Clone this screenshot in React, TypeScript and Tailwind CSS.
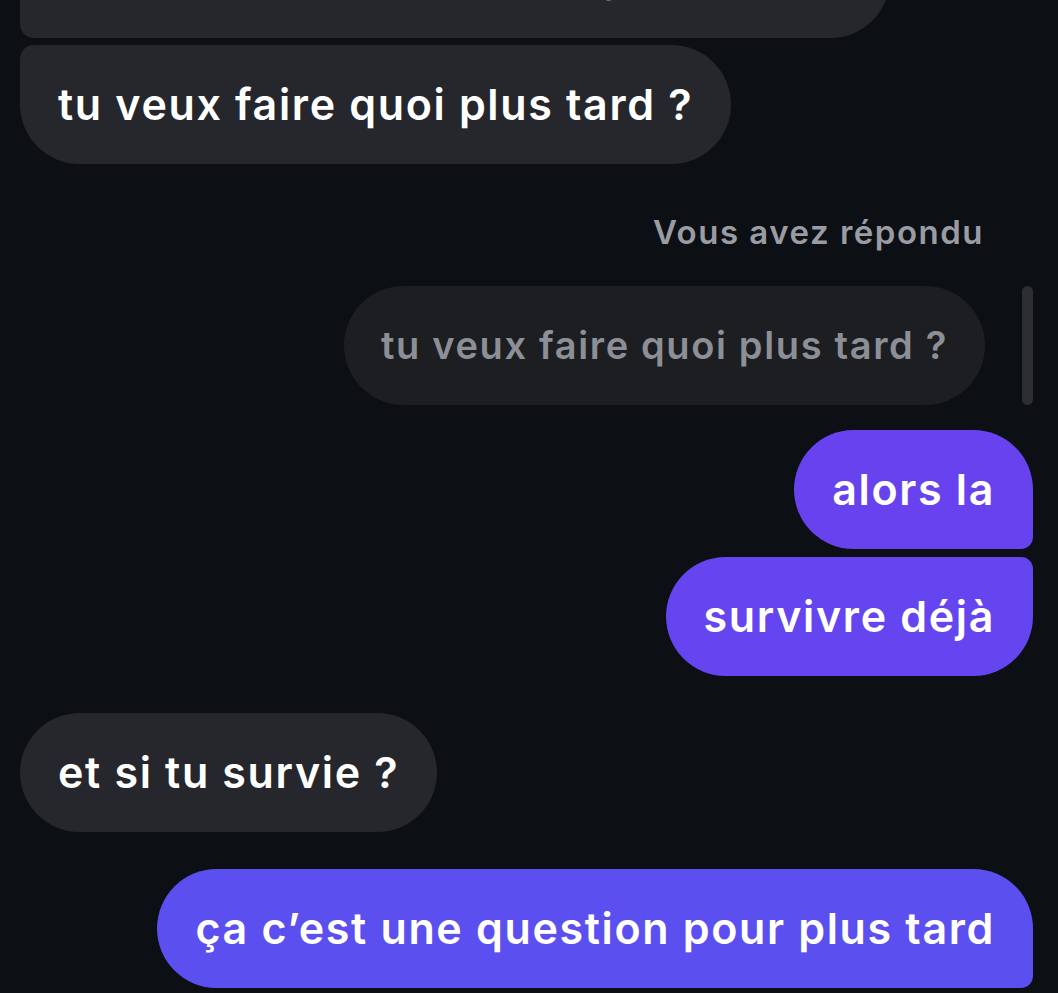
import React from 'react';

type Msg = {
    text: string;
    mine?: boolean;
    className: string;
};

function Bubble({ text, mine, className }: Msg) {
    return (
        <div className={`flex ${mine ? 'justify-end pr-[25px]' : 'justify-start pl-[20px]'}`}>
            <div
                className={`h-[119px] flex items-center px-[38px] text-[43px] font-semibold tracking-[1.65px] whitespace-nowrap ${className}`}
            >
                {text}
            </div>
        </div>
    );
}

export default function App() {
    return (
        <div
            className="w-[1058px] h-[993px] overflow-hidden bg-[#0c0f14] text-white"
            style={{ fontFamily: 'Inter, "Noto Sans", sans-serif' }}
        >
            {/* previous message, cut off at the top */}
            <div className="mt-[-81px] pl-[20px]">
                <div className="w-[870px] h-[119px] flex items-start pt-[24px] px-[38px] text-[43px] font-semibold tracking-[1.65px] whitespace-nowrap bg-[#25272c] rounded-tl-[60px] rounded-tr-[60px] rounded-br-[60px] rounded-bl-[14px]">
                    sinon t’en es où au collège
                </div>
            </div>

            <div className="mt-[7px]">
                <Bubble
                    text="tu veux faire quoi plus tard ?"
                    className="bg-[#25272c] rounded-tl-[14px] rounded-tr-[60px] rounded-br-[60px] rounded-bl-[60px]"
                />
            </div>

            {/* reply context */}
            <div className="mt-[48px] pr-[74px] flex justify-end">
                <span className="text-[33px] font-semibold tracking-[1.5px] text-[#9a9ca3] leading-[40px]">Vous avez répondu</span>
            </div>
            <div className="mt-[34px] flex justify-end items-stretch pr-[25px] gap-[37px]">
                <div className="h-[119px] flex items-center px-[37px] text-[38px] font-semibold tracking-[1.65px] whitespace-nowrap text-[#8d8f96] bg-[#1c1e22] rounded-[60px]">
                    tu veux faire quoi plus tard ?
                </div>
                <div className="w-[11px] rounded-full bg-[#2c2e33]" />
            </div>

            <div className="mt-[25px]">
                <Bubble
                    mine
                    text="alors la"
                    className="bg-[#6742ee] rounded-tl-[60px] rounded-tr-[60px] rounded-br-[12px] rounded-bl-[60px]"
                />
            </div>
            <div className="mt-[8px]">
                <Bubble
                    mine
                    text="survivre déjà"
                    className="bg-[#6545ef] rounded-tl-[60px] rounded-tr-[12px] rounded-br-[60px] rounded-bl-[60px]"
                />
            </div>

            <div className="mt-[37px]">
                <Bubble text="et si tu survie ?" className="bg-[#25272c] rounded-[60px]" />
            </div>

            <div className="mt-[37px]">
                <Bubble
                    mine
                    text="ça c’est une question pour plus tard"
                    className="bg-[#5c4ff0] rounded-tl-[60px] rounded-tr-[60px] rounded-br-[12px] rounded-bl-[60px]"
                />
            </div>
        </div>
    );
}
